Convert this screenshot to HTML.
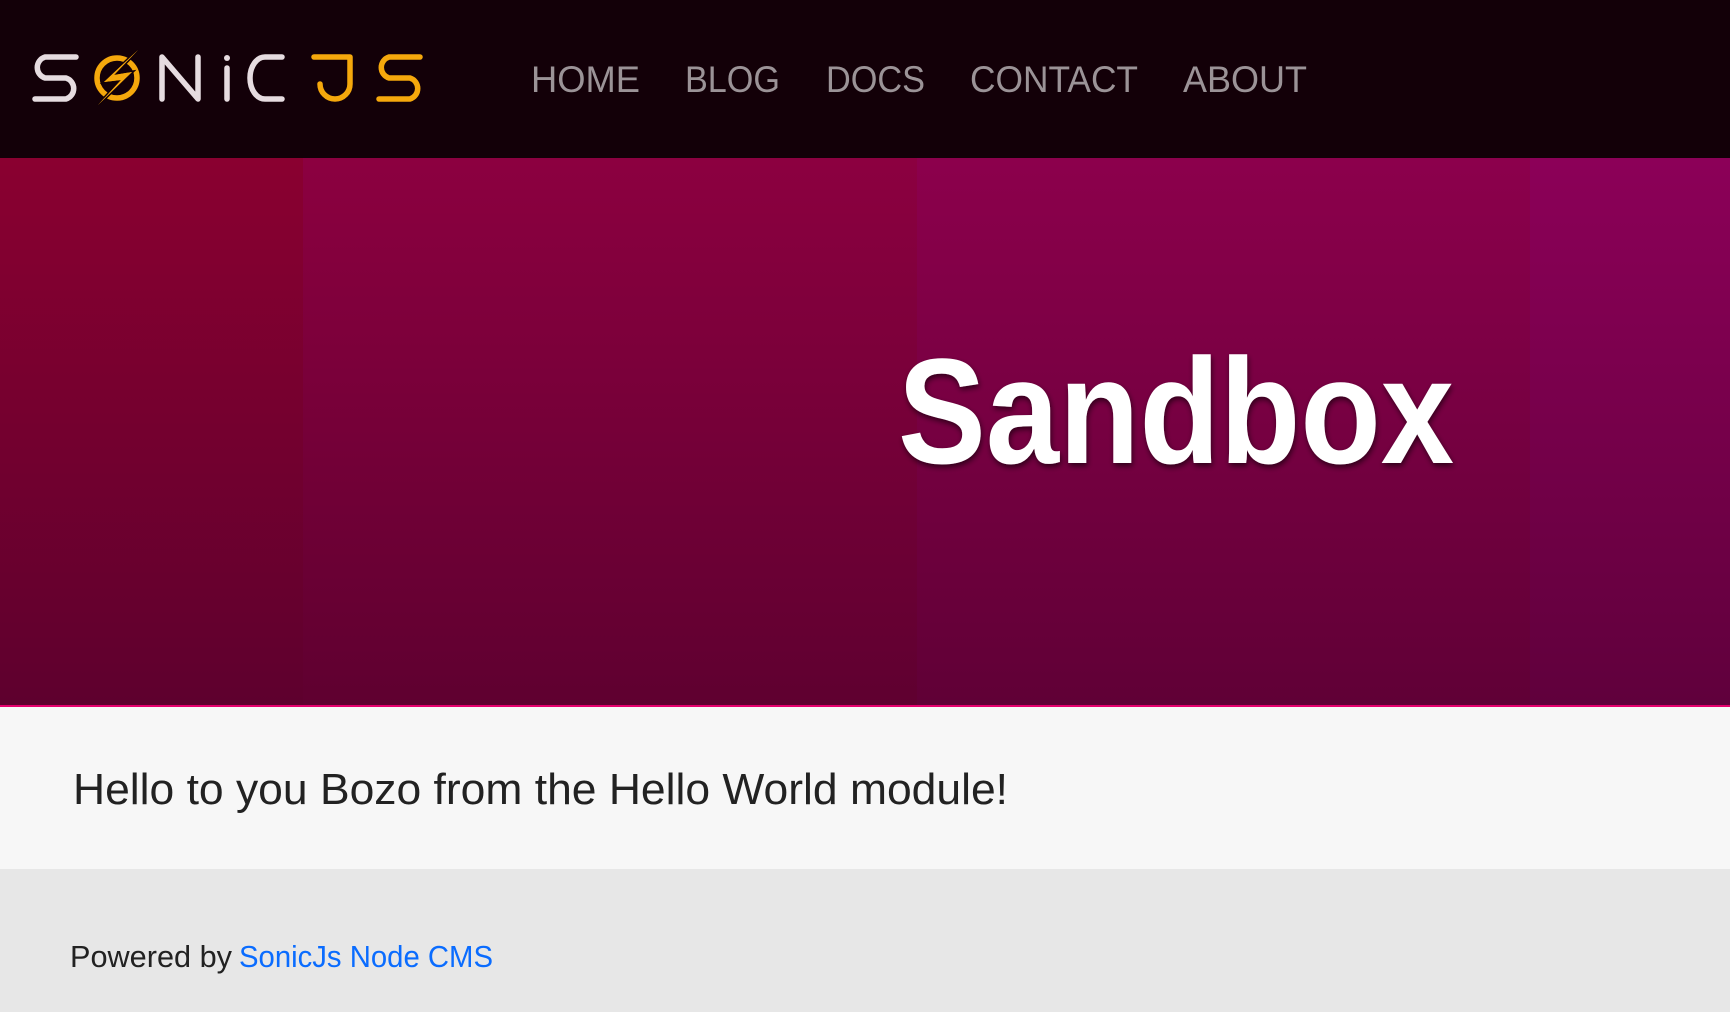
<!DOCTYPE html>
<html><head><meta charset="utf-8"><style>
html,body{margin:0;padding:0;width:1730px;height:1012px;overflow:hidden;font-family:"Liberation Sans",sans-serif}
#hdr{position:absolute;left:0;top:0;width:1730px;height:158px;background:#130008}
#hero{position:absolute;left:0;top:158px;width:1730px;height:547px;border-bottom:2px solid #e6006e}
.col{position:absolute;top:0;height:547px}
#content{position:absolute;left:0;top:707px;width:1730px;height:162px;background:#f7f7f7}
#foot{position:absolute;left:0;top:869px;width:1730px;height:143px;background:#e7e7e7}
svg{position:absolute;left:0;top:0}
</style></head><body>
<div id="hdr">
<svg width="1730" height="158">
<g fill="none" stroke="#e6dce0" stroke-width="5.5" stroke-linecap="round" stroke-linejoin="round">
<path d="M76 57 H45 A11 11 0 0 0 45 78 H66 A11 11 0 0 1 66 99 H35"/>
<path d="M162 99 V57 L198 99 V57"/>
<path d="M227 68 V99"/>
<path d="M282 57 H265 A15 21 0 0 0 265 99 H282"/>
</g>
<circle cx="227" cy="58" r="3" fill="#e6dce0"/>
<circle cx="117" cy="78" r="20" fill="none" stroke="#f5a80c" stroke-width="5.5"/>
<path d="M138 50 L104 82 L121 80 L98 105 L132 72 L114 75 Z" fill="#f5a80c" stroke="#130008" stroke-width="3" paint-order="stroke"/>
<path d="M138 50 L104 82 L121 80 L98 105 L132 72 L114 75 Z" fill="#f5a80c"/>
<g fill="none" stroke="#f5a80c" stroke-width="5.5" stroke-linecap="round" stroke-linejoin="round">
<path d="M314 57 H350 V84 A15 15 0 0 1 320 84"/>
<path d="M420 57 H389 A11 11 0 0 0 389 78 H410 A11 11 0 0 1 410 99 H379"/>
</g>
<g fill="#9b9397" font-size="37" font-family="Liberation Sans,sans-serif">
<text x="531" y="92" textLength="109" lengthAdjust="spacingAndGlyphs">HOME</text>
<text x="685" y="92" textLength="95" lengthAdjust="spacingAndGlyphs">BLOG</text>
<text x="826" y="92" textLength="99" lengthAdjust="spacingAndGlyphs">DOCS</text>
<text x="970" y="92" textLength="168" lengthAdjust="spacingAndGlyphs">CONTACT</text>
<text x="1183" y="92" textLength="124" lengthAdjust="spacingAndGlyphs">ABOUT</text>
</g>
</svg>
</div>
<div id="hero">
<div class="col" style="left:0;width:303px;background:linear-gradient(#8a0030,#5e002e)"></div>
<div class="col" style="left:303px;width:614px;background:linear-gradient(#8c0040,#5f0030)"></div>
<div class="col" style="left:917px;width:613px;background:linear-gradient(#8c004c,#600036)"></div>
<div class="col" style="left:1530px;width:200px;background:linear-gradient(#8c0058,#60003c)"></div>
<svg width="1730" height="547">
<defs><filter id="s" x="-10%" y="-20%" width="120%" height="140%"><feGaussianBlur in="SourceAlpha" stdDeviation="3"/><feOffset dx="1" dy="3"/><feComponentTransfer><feFuncA type="linear" slope="0.6"/></feComponentTransfer><feMerge><feMergeNode/><feMergeNode in="SourceGraphic"/></feMerge></filter></defs>
<text x="898" y="305" font-size="150" font-weight="700" fill="#fff" filter="url(#s)" textLength="556" lengthAdjust="spacingAndGlyphs">Sandbox</text>
</svg>
</div>
<div id="content">
<svg width="1730" height="162"><text x="73" y="97" font-size="44" fill="#222" textLength="935" lengthAdjust="spacingAndGlyphs">Hello to you Bozo from the Hello World module!</text></svg>
</div>
<div id="foot">
<svg width="1730" height="143"><text x="70" y="98" font-size="31" fill="#222"><tspan textLength="162" lengthAdjust="spacingAndGlyphs">Powered by</tspan><tspan x="239" fill="#0a6cff" textLength="254" lengthAdjust="spacingAndGlyphs">SonicJs Node CMS</tspan></text></svg>
</div>
</body></html>
